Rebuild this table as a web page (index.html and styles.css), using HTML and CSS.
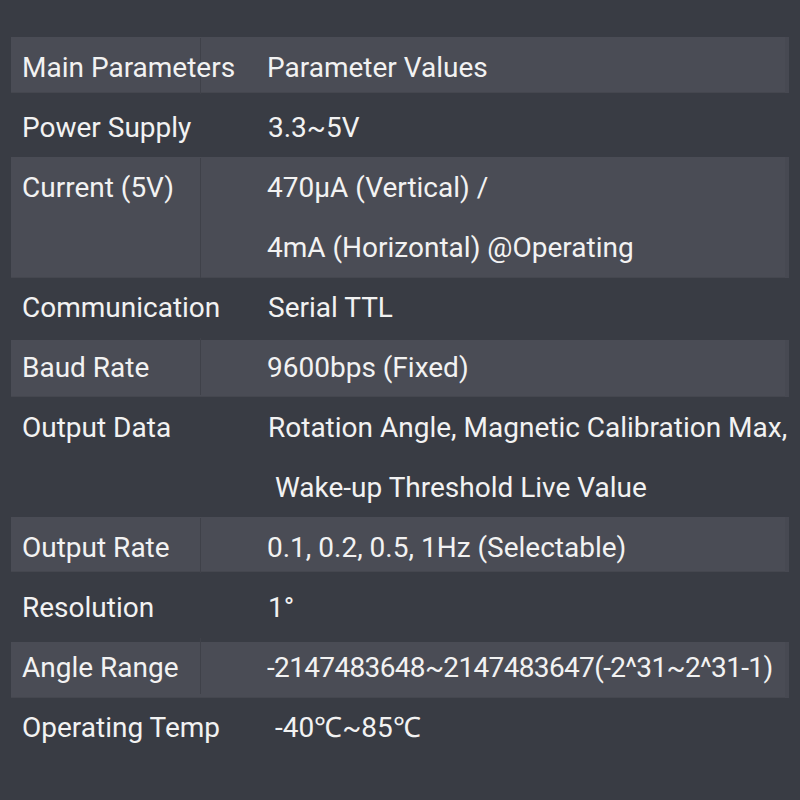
FILE: index.html
```html
<!DOCTYPE html>
<html>
<head>
<meta charset="utf-8">
<link rel="stylesheet" href="styles.css">
</head>
<body>
<div class="table">
  <div class="row r1 stripe"><div class="cell key">Main Parameters</div><div class="cell val">Parameter Values</div></div>
  <div class="row r2"><div class="cell key">Power Supply</div><div class="cell val">3.3~5V</div></div>
  <div class="row r3 stripe"><div class="cell key">Current (5V)</div><div class="cell val">470μA (Vertical) /<br>4mA (Horizontal) @Operating</div></div>
  <div class="row r4"><div class="cell key">Communication</div><div class="cell val">Serial TTL</div></div>
  <div class="row r5 stripe"><div class="cell key">Baud Rate</div><div class="cell val">9600bps (Fixed)</div></div>
  <div class="row r6"><div class="cell key">Output Data</div><div class="cell val">Rotation Angle, Magnetic Calibration Max,<br>&nbsp;Wake-up Threshold Live Value</div></div>
  <div class="row r7 stripe"><div class="cell key">Output Rate</div><div class="cell val">0.1, 0.2, 0.5, 1Hz (Selectable)</div></div>
  <div class="row r8"><div class="cell key">Resolution</div><div class="cell val">1°</div></div>
  <div class="row r9 stripe"><div class="cell key">Angle Range</div><div class="cell val digits">-2147483648~2147483647(-2^31~2^31-1)</div></div>
  <div class="row r10"><div class="cell key">Operating Temp</div><div class="cell val">&nbsp;-40℃~85℃</div></div>
</div>
</body>
</html>
```
FILE: styles.css
```css
html, body {
  margin: 0;
  padding: 0;
  background: #393c44;
  width: 800px;
  height: 800px;
  overflow: hidden;
}
.table {
  margin: 37px 11px 0 11px;
  width: 778px;
  font-family: Roboto, "Liberation Sans", sans-serif;
  font-size: 28px;
  color: #f2f2f2;
  line-height: 60px;
}
.row {
  display: flex;
  box-sizing: border-box;
}
.stripe {
  background: #4a4c55;
  box-shadow: inset -4px 0 0 #474952, inset 0 -1px 0 #45474f;
}
.cell {
  white-space: nowrap;
}
.key {
  width: 190px;
  padding-left: 11px;
  box-sizing: border-box;
}
.stripe .key {
  border-right: 1px solid #3f4149;
}
.val {
  padding-left: 67px;
}
.stripe .val {
  padding-left: 66px;
}
.digits {
  letter-spacing: -0.65px;
}
.r1 { height: 56px; }
.r1 .cell { margin-top: 1px; }
.r2 { height: 64px; }
.r2 .cell { margin-top: 5px; }
.r3 { height: 121px; }
.r3 .cell { margin-top: 1px; }
.r4 { height: 62px; }
.r4 .cell { margin-top: 0; }
.r5 { height: 57px; }
.r5 .cell { margin-top: -2px; }
.r6 { height: 120px; }
.r6 .cell { margin-top: 1px; }
.r7 { height: 55px; }
.r7 .cell { margin-top: 1px; }
.r8 { height: 70px; }
.r8 .cell { margin-top: 6px; }
.r9 { height: 56px; }
.r9 .cell { margin-top: -4px; }
.r10 { height: 62px; }
.r10 .cell { margin-top: 0; }
.stripe .cell { height: 100%; }
.r3 .cell, .r6 .cell { height: auto; }
```
